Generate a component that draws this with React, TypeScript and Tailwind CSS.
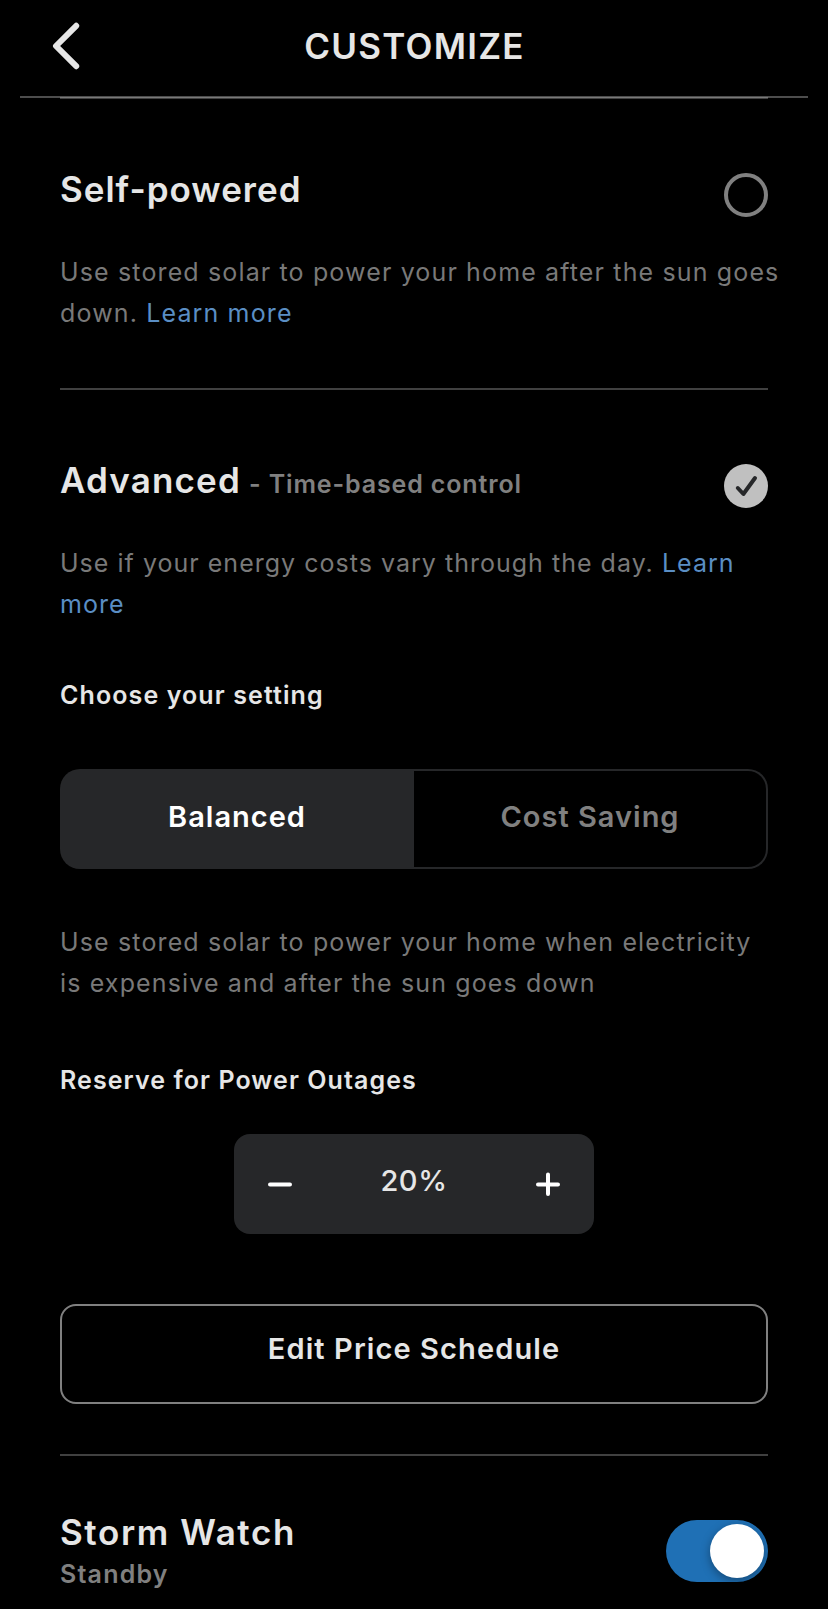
import React, { useState } from 'react';

const LearnMore: React.FC<{ children: React.ReactNode }> = ({ children }) => (
  <a href="#" className="text-[#5a8ec4]">{children}</a>
);

const Description: React.FC<{ className: string; children: React.ReactNode }> = ({ className, children }) => (
  <p className={`whitespace-nowrap text-[25px] font-normal leading-[41px] text-[#797979] ${className}`}>
    {children}
  </p>
);

const Header: React.FC = () => (
  <header className="mx-5 flex h-[98px] items-start border-b-2 border-white/30">
    <button aria-label="Back" className="ml-8 mt-[22px]">
      <svg width="30" height="48" viewBox="0 0 30 48" fill="none" stroke="#e6e6e6" strokeWidth="6" strokeLinecap="round" strokeLinejoin="round">
        <path d="M24.2 3.8 L4 24 L24.2 44.2" />
      </svg>
    </button>
    <h1 className="ml-[-61px] mt-[26px] grow text-center text-[35px] font-semibold leading-10 tracking-[1.25px] text-[#e6e6e6]">
      CUSTOMIZE
    </h1>
  </header>
);

const App: React.FC = () => {
  const [reserve, setReserve] = useState(20);

  return (
    <div className="h-[1609px] w-[828px] overflow-hidden bg-black font-['Inter',sans-serif] text-[#e6e6e6]">
      <Header />
      <main className="mx-[60px] -mt-px border-t-2 border-white/25">
        <section className="pt-[70px]">
          <div className="flex h-12 items-start justify-between">
            <h2 className="text-[35px] font-semibold leading-10 tracking-[1px]">Self-powered</h2>
            <span className="mt-1 h-11 w-11 rounded-full border-4 border-[#808080]" />
          </div>
          <Description className="mt-[35px] tracking-[1.14px]">
            Use stored solar to power your home after the sun goes
            <br />
            down. <LearnMore>Learn more</LearnMore>
          </Description>
        </section>

        <section className="mt-[54px] border-t-2 border-[#404040] pt-[70px]">
          <div className="flex h-12 items-start justify-between">
            <div className="flex items-baseline leading-10">
              <h2 className="text-[35px] font-semibold tracking-[1.15px]">Advanced</h2>
              <span className="ml-2 text-[25px] font-semibold tracking-[0.87px] text-[#808080]">- Time-based control</span>
            </div>
            <svg className="mt-1" width="44" height="44" viewBox="0 0 44 44" fill="none">
              <circle cx="22" cy="22" r="22" fill="#c0c0c0" />
              <path d="M13.8 24 L19.4 30 L31 14" stroke="#262729" strokeWidth="4" strokeLinecap="round" strokeLinejoin="round" />
            </svg>
          </div>
          <Description className="mt-[35px] tracking-[1.02px]">
            Use if your energy costs vary through the day. <LearnMore>Learn</LearnMore>
            <br />
            <LearnMore>more</LearnMore>
          </Description>

          <h3 className="mt-[50px] text-[25px] font-semibold leading-10 tracking-[1.1px]">Choose your setting</h3>
          <div className="mt-[54px] flex h-[100px] overflow-hidden rounded-[20px] bg-[#262729] text-[29px] font-semibold tracking-[1px]">
            <button className="w-[354px] pb-1 text-white">Balanced</button>
            <button className="my-0.5 mr-0.5 flex-1 rounded-r-[18px] bg-black pb-1 text-[#808080]">Cost Saving</button>
          </div>
          <Description className="mt-[53px] tracking-[1.14px]">
            Use stored solar to power your home when electricity
            <br />
            is expensive and after the sun goes down
          </Description>

          <h3 className="mt-[56px] text-[25px] font-semibold leading-10 tracking-[1.08px]">Reserve for Power Outages</h3>
          <div className="mx-auto mt-[34px] flex h-[100px] w-[360px] items-center justify-between rounded-2xl bg-[#262729] px-[34px]">
            <button aria-label="Decrease" onClick={() => setReserve(Math.max(0, reserve - 1))}>
              <svg width="24" height="24" viewBox="0 0 24 24" stroke="#fff" strokeWidth="4" strokeLinecap="round">
                <path d="M2 12.5 H22" />
              </svg>
            </button>
            <span className="pb-1.5 text-[29px] font-medium tracking-[0.6px]">{reserve}%</span>
            <button aria-label="Increase" onClick={() => setReserve(Math.min(100, reserve + 1))}>
              <svg width="24" height="24" viewBox="0 0 24 24" stroke="#fff" strokeWidth="4" strokeLinecap="round">
                <path d="M2 12.5 H22 M12 2.5 V22" />
              </svg>
            </button>
          </div>
          <button className="mt-[70px] h-[100px] w-full rounded-2xl border-2 border-[#808080] pb-2.5 text-[29px] font-semibold tracking-[1.1px]">
            Edit Price Schedule
          </button>
        </section>

        <section className="mt-[50px] flex items-start justify-between border-t-2 border-[#404040] pt-14">
          <div>
            <h2 className="text-[35px] font-semibold leading-10 tracking-[1.6px]">Storm Watch</h2>
            <p className="mt-0.5 text-[25px] font-semibold leading-10 tracking-[1.2px] text-[#808080]">Standby</p>
          </div>
          <div className="mt-2 flex h-[62px] w-[102px] items-center justify-end overflow-hidden rounded-full bg-[#1f70b5] pr-1">
            <span className="h-[54px] w-[54px] rounded-full bg-white shadow-[0_3px_10px_rgba(0,0,0,0.35)]" />
          </div>
        </section>
      </main>
    </div>
  );
};

export default App;
